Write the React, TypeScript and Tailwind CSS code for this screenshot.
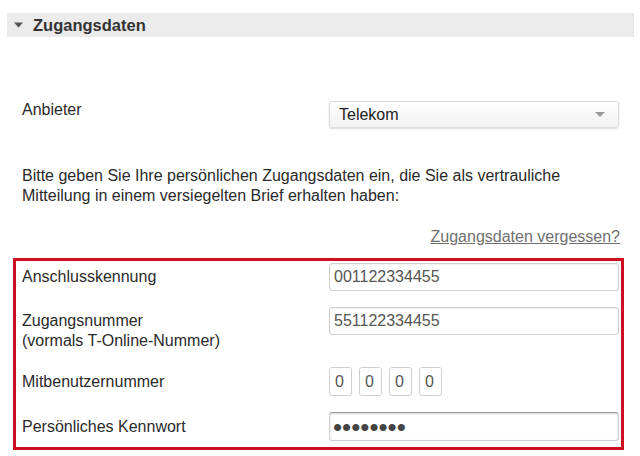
import React from 'react';

const inputCls =
    "h-[28px] w-[290px] rounded-[3px] border border-[#cfcfcf] bg-white pl-[4px] flex items-center text-[#555] shadow-[inset_0_1px_2px_rgba(0,0,0,0.06)]";

const App = () => {
    const digits = ['0', '0', '0', '0'];

    return (
        <div className="w-[640px] h-[456px] bg-white pt-[13px] text-[16px] text-[#2a2a2a] font-['Liberation_Sans',Arial,sans-serif] overflow-hidden">
            {/* section header */}
            <div className="ml-[7px] mr-[6px] h-[24px] bg-[#ebebeb] border-r border-[#e2e2e2] flex items-center">
                <svg className="ml-[7px]" width="9" height="6" viewBox="0 0 9 6">
                    <path d="M0 0.5 L9 0.5 L4.5 5.5 Z" fill="#555"/>
                </svg>
                <span className="ml-[10px] text-[16.5px] font-bold text-[#333]">Zugangsdaten</span>
            </div>

            {/* Anbieter */}
            <div className="mt-[64px] flex items-start pl-[22px]">
                <div className="w-[307px] leading-[18px]">Anbieter</div>
                <div className="h-[27px] w-[290px] rounded-[3px] border border-[#dcdcdc] bg-gradient-to-b from-white to-[#f1f1f1] shadow-[0_1px_2px_rgba(0,0,0,0.15)] flex items-center justify-between pl-[9px] pr-[13px]">
                    <span className="text-[#222]">Telekom</span>
                    <svg width="10" height="6" viewBox="0 0 10 6">
                        <path d="M0 0 L10 0 L5 5 Z" fill="#999"/>
                    </svg>
                </div>
            </div>

            <p className="mt-[38px] pl-[22px] w-[600px] leading-[20px]">
                Bitte geben Sie Ihre persönlichen Zugangsdaten ein, die Sie als vertrauliche Mitteilung in einem versiegelten Brief erhalten haben:
            </p>

            <div className="mt-[21px] pr-[20px] flex justify-end leading-[20px]">
                <a href="#" className="text-[#6f6f6f] underline">Zugangsdaten vergessen?</a>
            </div>

            {/* highlighted credentials */}
            <div className="mt-[11px] ml-[13px] w-[611px] border-[3px] border-[#cc1020] pl-[6px] pr-[2px] pt-[2px] pb-[6px] flex flex-col gap-[16px]">
                <div className="flex items-center">
                    <div className="w-[307px] leading-[20px]">Anschlusskennung</div>
                    <div className={inputCls}>001122334455</div>
                </div>
                <div className="flex items-start">
                    <div className="w-[307px] pt-[4px] leading-[20px]">
                        Zugangsnummer<br/>(vormals T-Online-Nummer)
                    </div>
                    <div className={inputCls}>551122334455</div>
                </div>
                <div className="flex items-center">
                    <div className="w-[307px] leading-[20px]">Mitbenutzernummer</div>
                    <div className="flex gap-[7px]">
                        {digits.map((d, i) => (
                            <div key={i} className="h-[29px] w-[23px] rounded-[3px] border border-[#cfcfcf] bg-white pl-[5px] flex items-center text-[#555]">
                                {d}
                            </div>
                        ))}
                    </div>
                </div>
                <div className="flex items-center">
                    <div className="w-[307px] leading-[20px]">Persönliches Kennwort</div>
                    <div className="h-[29px] w-[290px] rounded-[3px] border border-[#cfcfcf] border-t-[#9a9a9a] bg-white pl-[3px] flex items-center text-[#444] text-[26px] leading-none shadow-[inset_0_1px_2px_rgba(0,0,0,0.18)]">
                        ••••••••
                    </div>
                </div>
            </div>
        </div>
    );
};

export default App;
